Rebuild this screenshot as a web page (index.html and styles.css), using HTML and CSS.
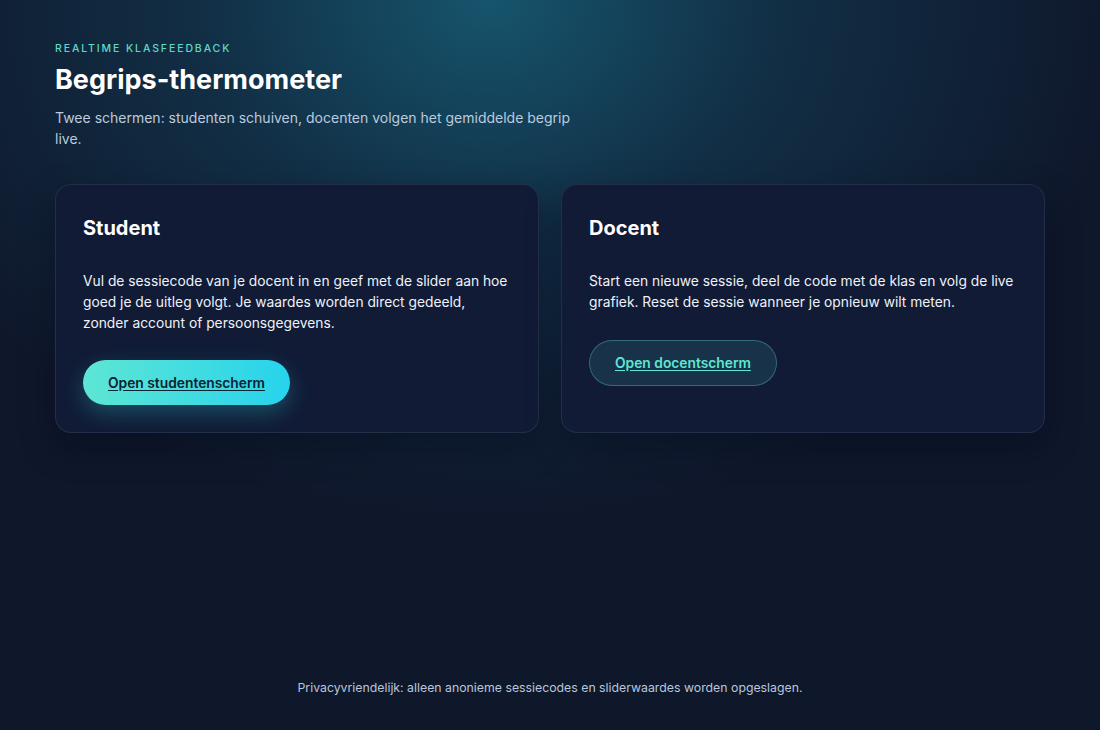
FILE: index.html
```html
<!DOCTYPE html>
<html lang="nl">
<head>
<meta charset="utf-8">
<title>Begrips-thermometer</title>
<link rel="stylesheet" href="styles.css">
</head>
<body>
<div class="page">
  <main class="container">
    <header class="hero">
      <p class="eyebrow">Realtime klasfeedback</p>
      <h1 class="title">Begrips-thermometer</h1>
      <p class="lead">Twee schermen: studenten schuiven, docenten volgen het gemiddelde begrip live.</p>
    </header>
    <section class="cards">
      <article class="card">
        <h2 class="card-title">Student</h2>
        <p class="card-text">Vul de sessiecode van je docent in en geef met de slider aan hoe goed je de uitleg volgt. Je waardes worden direct gedeeld, zonder account of persoonsgegevens.</p>
        <a class="btn btn-primary" href="#">Open studentenscherm</a>
      </article>
      <article class="card">
        <h2 class="card-title">Docent</h2>
        <p class="card-text">Start een nieuwe sessie, deel de code met de klas en volg de live grafiek. Reset de sessie wanneer je opnieuw wilt meten.</p>
        <a class="btn btn-secondary" href="#">Open docentscherm</a>
      </article>
    </section>
  </main>
  <footer class="footer">Privacyvriendelijk: alleen anonieme sessiecodes en sliderwaardes worden opgeslagen.</footer>
</div>
</body>
</html>
```
FILE: styles.css
```css
* { box-sizing: border-box; }
html, body { margin: 0; height: 100%; }
body {
  font-family: Inter, "Noto Sans", sans-serif;
  color: #f1f5f9;
  background:
    radial-gradient(ellipse 640px 520px at 490px 0px, rgba(22, 88, 112, 0.95) 0%, rgba(20, 70, 95, 0.5) 45%, rgba(15, 23, 42, 0) 100%),
    #0f172b;
}
.page {
  min-height: 730px;
  display: flex;
  flex-direction: column;
}
.container {
  width: 990px;
  margin: 0 auto;
  padding-top: 42px;
  flex: 1;
}
.eyebrow {
  margin: 0;
  font-size: 10.5px;
  letter-spacing: 0.18em;
  text-transform: uppercase;
  color: #5fd8c8;
  font-weight: 500;
  line-height: 13px;
}
.title {
  margin: 9px 0 0;
  font-size: 27px;
  line-height: 32px;
  font-weight: 700;
  color: #ffffff;
}
.lead {
  margin: 11px 0 0;
  max-width: 530px;
  font-size: 14px;
  line-height: 21px;
  color: #bccadf;
}
.cards {
  margin-top: 35px;
  display: grid;
  grid-template-columns: 1fr 1fr;
  gap: 22px;
}
.card {
  background: #111b36;
  border: 1px solid rgba(148, 163, 184, 0.14);
  border-radius: 16px;
  padding: 28px 27px 27px;
  display: flex;
  flex-direction: column;
  align-items: flex-start;
  box-shadow: 0 14px 34px rgba(2, 6, 20, 0.35);
}
.card-title {
  margin: 0;
  font-size: 20px;
  line-height: 30px;
  font-weight: 700;
  color: #ffffff;
}
.card-text {
  margin: 28px 0 0;
  font-size: 13.8px;
  line-height: 21px;
  color: #eef2f8;
}
.btn {
  margin-top: 26px;
  display: inline-flex;
  align-items: center;
  justify-content: center;
  border-radius: 999px;
  font-size: 13.8px;
  font-weight: 600;
  text-decoration: underline;
  text-underline-offset: 2px;
}
.btn-primary {
  height: 45px;
  padding: 0 25px;
  color: #0b2230;
  background: linear-gradient(90deg, #5ee6d4, #27d3ec);
  box-shadow: 0 8px 22px rgba(45, 212, 220, 0.28);
}
.btn-secondary {
  margin-top: 27px;
  height: 46px;
  padding: 0 25px;
  color: #5ee6d4;
  background: rgba(45, 130, 140, 0.22);
  border: 1px solid rgba(94, 200, 200, 0.38);
}
.footer {
  text-align: center;
  font-size: 12.3px;
  color: #b9c6dc;
  padding-bottom: 35px;
}
```
